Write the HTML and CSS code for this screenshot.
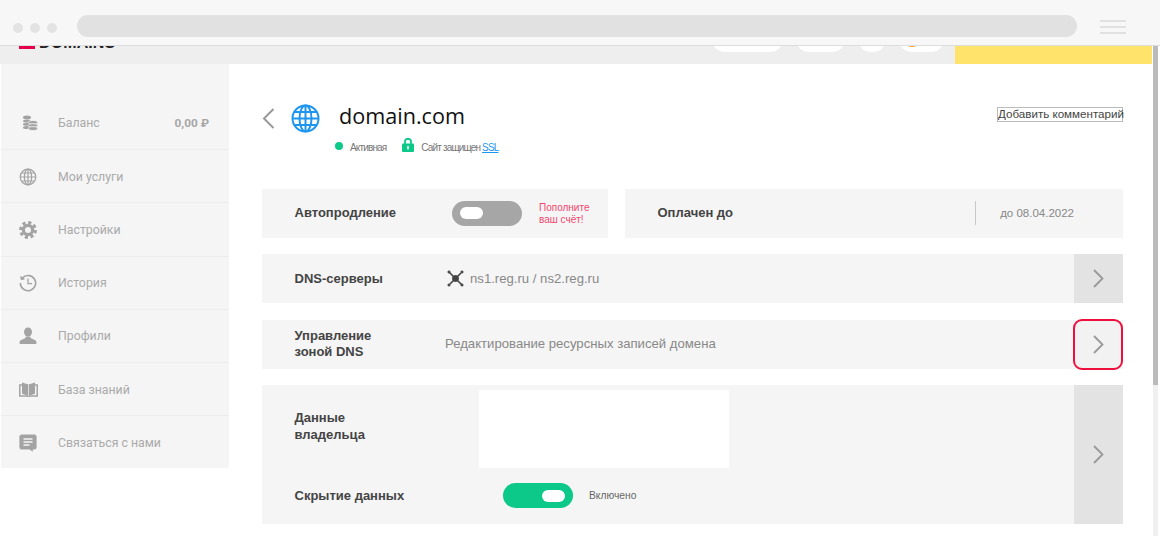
FILE: index.html
```html
<!DOCTYPE html>
<html lang="ru">
<head>
<meta charset="utf-8">
<title>domain.com</title>
<link rel="stylesheet" href="styles.css">
</head>
<body>
<div class="topbar">
  <div class="dots"><span></span><span></span><span></span></div>
  <div class="address"></div>
  <div class="burger"><span></span><span></span><span></span></div>
</div>
<div class="viewport">
  <div class="page">
    <header class="site-head">
      <div class="logo"><span class="logo-mark"></span><span class="logo-text">DOMAINS</span></div>
      <div class="pills">
        <span class="pill pill-a"></span>
        <span class="pill pill-b"></span>
        <span class="pill pill-c"></span>
        <span class="pill pill-d"><span class="coin"></span></span>
      </div>
      <div class="promo"></div>
    </header>
    <div class="columns">
      <nav class="sidebar">
        <a class="nav-item nav-first">
          <span class="nav-icon"><svg class="ico-coins" width="16" height="16" viewBox="0 0 16 16"><g fill="#a3a3a3"><ellipse cx="5" cy="2.4" rx="4" ry="1.9"/><ellipse cx="5" cy="6" rx="4" ry="1.6"/><ellipse cx="5" cy="9.2" rx="4" ry="1.5"/><ellipse cx="5" cy="12.4" rx="4" ry="1.5"/></g><g fill="#a3a3a3" stroke="#f5f5f5" stroke-width=".8"><ellipse cx="11" cy="7.4" rx="4.6" ry="2"/><ellipse cx="11" cy="10.6" rx="4.6" ry="2"/><ellipse cx="11" cy="13.6" rx="4.6" ry="2"/></g></svg></span>
          <span class="nav-label">Баланс</span>
          <span class="nav-value">0,00 ₽</span>
        </a>
        <a class="nav-item">
          <span class="nav-icon"><svg width="18" height="18" viewBox="0 0 18 18" fill="none" stroke="#a3a3a3" stroke-width="1.2"><circle cx="9" cy="9" r="7.8"/><ellipse cx="9" cy="9" rx="3.6" ry="7.8"/><path d="M9 1.2v15.6M1.2 9h15.6M2.3 5h13.4M2.3 13h13.4"/></svg></span>
          <span class="nav-label">Мои услуги</span>
        </a>
        <a class="nav-item">
          <span class="nav-icon"><svg width="18" height="18" viewBox="0 0 18 18" fill="none"><circle cx="9" cy="9" r="7.4" stroke="#a3a3a3" stroke-width="3" stroke-dasharray="3.2 2.6"/><circle cx="9" cy="9" r="4.6" stroke="#a3a3a3" stroke-width="3.2"/></svg></span>
          <span class="nav-label">Настройки</span>
        </a>
        <a class="nav-item">
          <span class="nav-icon"><svg width="18" height="18" viewBox="0 0 18 18" fill="none" stroke="#a3a3a3" stroke-width="1.6"><path d="M3.2 4.200A7.600 7.600 0 1 1 1.400 9"/><path d="M1.800 2.200l.5 3.200 3.200-.5" stroke-width="1.100" fill="#a3a3a3"/><path d="M9 4.600V9.600h4" stroke-width="1.300"/></svg></span>
          <span class="nav-label">История</span>
        </a>
        <a class="nav-item">
          <span class="nav-icon"><svg width="18" height="18" viewBox="0 0 18 18" fill="#a3a3a3"><ellipse cx="9" cy="5" rx="4" ry="4.6"/><path d="M6.800 9.400h4.400l.4 1.600 4.600 2.200c.8.400 1.200 1.200 1.200 2V17H.6v-1.800c0-.8.400-1.600 1.200-2L6.400 11z"/></svg></span>
          <span class="nav-label">Профили</span>
        </a>
        <a class="nav-item">
          <span class="nav-icon"><svg width="19" height="15" viewBox="0 0 19 15"><path fill="#a3a3a3" d="M3 .4l6.500 2.200L16 .4v11.400l-6.500 2.200L3 11.800z"/><path fill="none" stroke="#a3a3a3" stroke-width="1.500" d="M3 3H.8v11h7.400l1.300.6 1.300-.6h7.400V3H16"/><path stroke="#f5f5f5" stroke-width=".7" d="M9.500 2.600V14"/></svg></span>
          <span class="nav-label">База знаний</span>
        </a>
        <a class="nav-item nav-last">
          <span class="nav-icon"><svg width="18" height="18" viewBox="0 0 18 18"><path fill="#a3a3a3" d="M2.600.4h12.800c1.200 0 2.200 1 2.200 2.200v11c0 1.200-1 2-2.200 2h-1.600v2.200l-3.200-2.200H2.600c-1.200 0-2.200-.8-2.200-2v-11C.4 1.400 1.400.4 2.600.4z"/><path stroke="#f5f5f5" stroke-width="1.500" d="M4.500 5h9M4.500 8h9M4.500 11h6"/></svg></span>
          <span class="nav-label">Связаться с нами</span>
        </a>
      </nav>
      <main class="content">
        <section class="domain-head">
          <div class="domain-info">
            <div class="domain-title">
              <svg class="back" width="13" height="21" viewBox="0 0 13 21" fill="none" stroke="#999" stroke-width="2"><path d="M11.500 1 2 10.500 11.500 20"/></svg>
              <svg class="globe" width="29" height="29" viewBox="0 0 29 29" fill="none" stroke="#1e96f0" stroke-width="2"><circle cx="14.500" cy="14.500" r="13"/><ellipse cx="14.500" cy="14.500" rx="6" ry="13"/><path d="M14.500 1.500v26M1.500 14.500h26M3.500 8h22M3.500 21h22"/></svg>
              <h1>domain.com</h1>
            </div>
            <div class="domain-status">
              <span class="dot"></span><span class="status-text">Активная</span>
              <svg class="lock" width="12" height="14" viewBox="0 0 12 14"><path fill="none" stroke="#0cc98a" stroke-width="1.800" d="M3 6.500V3.800a3 3 0 0 1 6 0v2.700"/><rect y="5.600" width="12" height="8.400" rx="1" fill="#0cc98a"/><rect x="5.200" y="8" width="1.600" height="3.400" fill="#fff"/></svg>
              <span class="status-text">Сайт защищен <a class="ssl">SSL</a></span>
            </div>
          </div>
          <button class="comment-btn">Добавить комментарий</button>
        </section>

        <section class="cards">
          <div class="card-pair">
            <div class="card card-auto">
              <span class="card-label label-auto">Автопродление</span>
              <span class="toggle toggle-off"><span class="knob"></span></span>
              <span class="warn">Пополните<br>ваш счёт!</span>
            </div>
            <div class="card card-paid">
              <span class="card-label">Оплачен до</span>
              <span class="divider"></span>
              <span class="paid-date">до 08.04.2022</span>
            </div>
          </div>
          <div class="card">
            <span class="card-label label-main label-dns">DNS-серверы</span>
            <span class="card-text ns">
              <svg width="17" height="17" viewBox="0 0 17 17" fill="#444" stroke="#444"><path stroke-width="1.600" d="M2.500 2.500l12 12M14 3l-11 11"/><circle cx="8.500" cy="8.500" r="3"/><circle cx="2" cy="2" r="1.100"/><circle cx="15" cy="2" r="1.100"/><circle cx="2" cy="15" r="1.100"/><circle cx="15" cy="15" r="1.100"/></svg>
              ns1.reg.ru / ns2.reg.ru
            </span>
            <span class="go"><svg width="11" height="19" viewBox="0 0 11 19" fill="none" stroke="#999" stroke-width="1.800"><path d="M1 1l8.500 8.500L1 18"/></svg></span>
          </div>
          <div class="card">
            <span class="card-label label-main">Управление<br>зоной DNS</span>
            <span class="card-text zone-text">Редактирование ресурсных записей домена</span>
            <span class="go go-marked"><svg width="11" height="19" viewBox="0 0 11 19" fill="none" stroke="#999" stroke-width="1.800"><path d="M1 1l8.500 8.500L1 18"/></svg></span>
          </div>
          <div class="card card-owner">
            <div class="owner-body">
              <div class="owner-top">
                <span class="card-label label-owner">Данные<br>владельца</span>
                <div class="owner-blank"></div>
              </div>
              <div class="owner-bottom">
                <span class="card-label label-hide">Скрытие данных</span>
                <span class="toggle toggle-on"><span class="knob"></span></span>
                <span class="on-text">Включено</span>
              </div>
            </div>
            <span class="go"><svg width="11" height="19" viewBox="0 0 11 19" fill="none" stroke="#999" stroke-width="1.800"><path d="M1 1l8.500 8.500L1 18"/></svg></span>
          </div>
        </section>
      </main>
    </div>
  </div>
  <div class="scrollbar"><div class="thumb"></div></div>
</div>
</body>
</html>
```
FILE: styles.css
```css
* { box-sizing: border-box; }
html, body { margin: 0; height: 536px; overflow: hidden; background: #fff; }
body { font-family: "Liberation Sans", Arial, sans-serif; color: #444; }

/* browser chrome */
.topbar { height: 46px; background: #f7f7f7; border-bottom: 1px solid #ddd; display: flex; align-items: flex-start; padding: 15px 34px 0 13px; }
.dots { display: flex; gap: 7px; width: 64px; padding-top: 8px; }
.dots span { width: 10px; height: 10px; border-radius: 50%; background: #e3e3e3; }
.address { width: 1000px; height: 22px; border-radius: 11px; background: #e1e1e1; }
.burger { margin-left: 23px; width: 26px; padding-top: 5px; display: flex; flex-direction: column; gap: 4px; }
.burger span { height: 2px; background: #e1e1e1; }

.viewport { display: flex; height: 490px; }
.page { width: 1153px; flex: none; }
.scrollbar { width: 5px; background: #f0f0f0; }
.thumb { height: 339px; background: #bbb; }

/* site header */
.site-head { height: 18px; background: #eee; display: flex; overflow: hidden; padding-left: 19px; margin-right: 1px; }
.logo { display: flex; align-items: flex-end; gap: 4px; height: 18px; padding-bottom: 15px; }
.logo-mark { width: 16px; height: 16px; background: #e6004c; flex: none; }
.logo-text { font: bold 16px/21px "Liberation Sans", sans-serif; color: #222; margin-bottom: -4px; letter-spacing: .1px; }
.pills { margin-left: auto; display: flex; gap: 13px; align-items: flex-end; height: 18px; padding-bottom: 12px; margin-right: 11px; }
.pill { height: 26px; border-radius: 13px; background: #fff; flex: none; display: flex; align-items: flex-end; }
.pill-a { width: 71px; }
.pill-b { width: 49px; }
.pill-c { width: 28px; }
.pill-d { width: 45px; padding: 0 0 5px 5px; }
.coin { width: 16px; height: 16px; border-radius: 50%; background: #f9a825; }
.promo { width: 197px; background: #ffe36b; flex: none; }

.columns { display: flex; align-items: flex-start; }

/* sidebar */
.sidebar { width: 228px; margin-left: 1px; background: #f5f5f5; flex: none; }
.nav-item { height: 53.25px; display: flex; align-items: center; padding: 1px 20px 0 18px; border-bottom: 1px solid #ececec; font: 12.300px "Roboto", sans-serif; color: #aaa; }
.nav-first { height: 86px; padding-top: 33px; }
.nav-last { height: 51.750px; border-bottom: 0; }
.nav-icon { width: 39px; flex: none; display: flex; align-items: center; }
.ico-coins { margin-left: 3px; }
.nav-value { margin-left: auto; font-size: 11.800px; font-weight: 700; color: #a6a6a6; }

/* main */
.content { flex: 1; padding: 0 30px 0 33px; min-width: 0; }
.domain-head { display: flex; justify-content: space-between; align-items: flex-start; height: 124.5px; padding-top: 40px; }
.domain-title { display: flex; align-items: center; height: 29px; }
.back { flex: none; }
.globe { margin-left: 16px; flex: none; }
h1 { margin: -7px 0 0 19px; font: 400 21.600px/29px "Open Sans", sans-serif; color: #111; }
.domain-status { display: flex; align-items: center; margin: 5px 0 0 73px; height: 16px; }
.dot { width: 8px; height: 8px; border-radius: 50%; background: #0cc98a; flex: none; }
.status-text { font: 10px "Liberation Sans", sans-serif; color: #777; letter-spacing: -.85px; margin-left: 7px; padding-top: 2px; }
.lock { margin: 0 0 2px 16px; flex: none; }
.ssl { color: #1e96f0; text-decoration: underline; }
.comment-btn { margin-top: 3px; width: 126px; height: 15px; padding: 0 0 2px; border: 1px solid #bbb; background: #fff; font: 11.600px/12px "Liberation Sans", sans-serif; color: #444; white-space: nowrap; text-align: center; }

.cards { display: flex; flex-direction: column; gap: 16.5px; }
.card-pair { display: grid; grid-template-columns: 346px 498px; gap: 17px; }
.card { height: 49px; background: #f5f5f5; display: flex; align-items: center; padding-left: 33px; }
.card-label { font: 700 13px/16.500px "Liberation Sans", sans-serif; color: #444; flex: none; margin-left: -.5px; }
.label-auto { width: 157.5px; }
.label-dns { padding-top: 2px; }
.toggle { width: 70px; height: 25px; border-radius: 12.500px; display: flex; align-items: center; padding: 0 8px; flex: none; }
.toggle-off { background: #a6a6a6; }
.toggle-on { background: #0cc98a; justify-content: flex-end; }
.knob { width: 23px; height: 12px; border-radius: 6px; background: #fff; }
.warn { margin: 2px 0 0 17px; font: 10px/12px "Liberation Sans", sans-serif; color: #f4476f; }
.card-paid { padding-right: 49px; }
.divider { margin-left: auto; width: 1px; height: 24px; background: #c8c8c8; }
.paid-date { margin-left: 24px; font: 11.500px "Liberation Sans", sans-serif; color: #888; }
.label-main { width: 150.5px; }
.card-text { flex: 1; font: 13.150px "Liberation Sans", sans-serif; color: #888; }
.zone-text { padding-bottom: 2px; }
.ns { display: flex; align-items: center; gap: 6px; margin-left: 2px; }
.go { width: 49px; height: 100%; background: #e3e3e3; flex: none; display: flex; align-items: center; justify-content: center; margin-left: auto; }
.go-marked { width: 50px; height: 51px; background: #f2f2f2; border: 2px solid #ee0f3d; border-radius: 9px; }

.card-owner { height: 139px; padding-left: 33px; align-items: stretch; }
.owner-body { flex: 1; display: flex; flex-direction: column; }
.owner-top { display: flex; padding-top: 5px; height: 98px; }
.label-owner { width: 184.5px; padding-top: 20px; }
.owner-blank { width: 250px; height: 78px; background: #fff; }
.owner-bottom { display: flex; align-items: center; height: 25px; }
.label-hide { width: 208.5px; padding-top: 2px; }
.on-text { margin-left: 16px; font: 10.300px "Liberation Sans", sans-serif; color: #666; }
```
